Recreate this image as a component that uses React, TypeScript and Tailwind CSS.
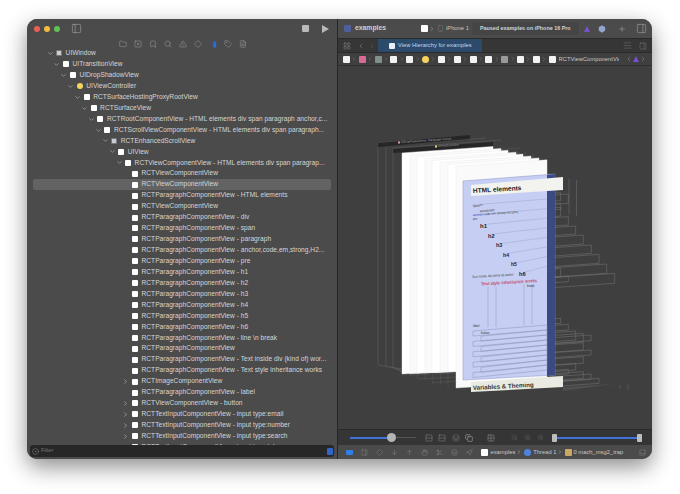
import React from "react";
import { PanelLeft, Folder, SquareX, Bookmark, Search, TriangleAlert, Diamond, SprayCan, Tag, FileText, ChevronDown, ChevronRight, ChevronLeft, Plus, LayoutGrid, AlignJustify, PanelRight, ZoomIn, ZoomOut, Grid2x2, Rows2, Layers, Copy, CircleDot, ArrowUp, ArrowDown, Hand, Scissors, Navigation, Box, Smartphone } from "lucide-react";

type Row = { n: number; t: string; c?: "d" | "r"; k?: "y" | "g" };
const rows: Row[] = [
  { n: 0, t: "UIWindow", c: "d", k: "g" },
  { n: 1, t: "UITransitionView", c: "d" },
  { n: 2, t: "UIDropShadowView", c: "d" },
  { n: 3, t: "UIViewController", c: "d", k: "y" },
  { n: 4, t: "RCTSurfaceHostingProxyRootView", c: "d" },
  { n: 5, t: "RCTSurfaceView", c: "d" },
  { n: 6, t: "RCTRootComponentView - HTML elements div span paragraph anchor,c...", c: "d" },
  { n: 7, t: "RCTScrollViewComponentView - HTML elements div span paragraph...", c: "d" },
  { n: 8, t: "RCTEnhancedScrollView", c: "d", k: "g" },
  { n: 9, t: "UIView", c: "d" },
  { n: 10, t: "RCTViewComponentView - HTML elements div span paragrap...", c: "d" },
  { n: 11, t: "RCTViewComponentView" },
  { n: 11, t: "RCTViewComponentView" },
  { n: 11, t: "RCTParagraphComponentView - HTML elements" },
  { n: 11, t: "RCTViewComponentView" },
  { n: 11, t: "RCTParagraphComponentView - div" },
  { n: 11, t: "RCTParagraphComponentView - span" },
  { n: 11, t: "RCTParagraphComponentView - paragraph" },
  { n: 11, t: "RCTParagraphComponentView - anchor,code,em,strong,H2..." },
  { n: 11, t: "RCTParagraphComponentView - pre" },
  { n: 11, t: "RCTParagraphComponentView - h1" },
  { n: 11, t: "RCTParagraphComponentView - h2" },
  { n: 11, t: "RCTParagraphComponentView - h3" },
  { n: 11, t: "RCTParagraphComponentView - h4" },
  { n: 11, t: "RCTParagraphComponentView - h5" },
  { n: 11, t: "RCTParagraphComponentView - h6" },
  { n: 11, t: "RCTParagraphComponentView - line \\n break" },
  { n: 11, t: "RCTParagraphComponentView" },
  { n: 11, t: "RCTParagraphComponentView - Text inside div (kind of) wor..." },
  { n: 11, t: "RCTParagraphComponentView - Text style inheritance works" },
  { n: 11, t: "RCTImageComponentView", c: "r" },
  { n: 11, t: "RCTParagraphComponentView - label" },
  { n: 11, t: "RCTViewComponentView - button", c: "r" },
  { n: 11, t: "RCTTextInputComponentView - input type:email", c: "r" },
  { n: 11, t: "RCTTextInputComponentView - input type:number", c: "r" },
  { n: 11, t: "RCTTextInputComponentView - input type:search", c: "r" },
  { n: 11, t: "RCTTextInputComponentView - input type:tel", c: "r" },
];

const ic = "text-[#b4b4b4]";
const crumbs = ["w", "p", "g", "w", "w", "y", "w", "w", "w", "w", "s", "w", "w", "w"];

// right-hand wire boxes: [top, bottom, right] in zoom units of the reference
const wires: [number, number, number][] = [
  [68, 92, 62], [72, 100, 85], [100, 118, 62], [112, 138, 62], [140, 165, 85], [168, 192, 107], [195, 222, 130], [225, 250, 154],
  [253, 280, 177], [282, 310, 200], [310, 340, 224], [295, 320, 62], [318, 335, 85],
  [445, 460, 62], [463, 480, 85], [483, 510, 107], [490, 515, 130], [495, 512, 153], [518, 540, 130], [540, 555, 153],
  [560, 580, 130], [580, 600, 107], [598, 612, 85], [605, 625, 130], [612, 628, 153], [625, 640, 177],
];

function Tree() {
  return (
    <div className="flex-1 min-h-0 overflow-hidden">
      <div className="-mt-[2px]">
        {rows.map((r, i) => (
          <div
            key={i}
            className={"h-[10.94px] flex items-center rounded-[2px] mx-[6px] whitespace-nowrap " + (i === 12 ? "bg-[#636363]" : "")}
            style={{ paddingLeft: 13 + 6.9 * r.n }}
          >
            <span className="w-[8px] flex justify-center shrink-0 text-[#bdbdbd]">
              {r.c === "d" && <ChevronDown size={7} strokeWidth={2} />}
              {r.c === "r" && <ChevronRight size={7} strokeWidth={2} />}
            </span>
            <span
              className={
                "w-[6px] h-[6px] ml-[2px] mr-[3.6px] shrink-0 rounded-[1px] " +
                (r.k === "y" ? "bg-[#f4d35e] rounded-full" : r.k === "g" ? "bg-[#c9ccd2] border border-[#777]" : "bg-white")
              }
            />
            <span className="text-[6.6px] leading-none text-[#d6d6d6] tracking-[0.03px]">{r.t}</span>
          </div>
        ))}
      </div>
    </div>
  );
}

function Canvas() {
  const lefts = [402, 410, 417, 425, 432, 440, 448, 456];
  return (
    <svg className="absolute left-0 top-0" width="314" height="363" viewBox="338 66 314 363" fontFamily="'Liberation Sans', sans-serif">
      {/* back wireframes on the left */}
      {[378, 386, 393].map((x, i) => (
        <path key={i} d={`M${x} ${143 + i * 2.5}L${x + 92 + i * 8} ${136 + i * 2}M${x} ${143 + i * 2.5}V${365 + i}L402 ${369 + i * 1.5}`} stroke="#5f5f5f" strokeWidth="0.6" fill="none" />
      ))}
      <path d="M378 143L470 135V139L378 147Z" fill="#262626" />
      <path d="M393 149L493 142V146L393 153Z" fill="#262626" />
      <rect x="398" y="141.5" width="2" height="2" fill="#e39ab0" />
      <text x="401" y="143" fontSize="2.8" fill="#aaa" transform="rotate(-4 401 143)">UIDropShadowView - Paragraph vertical</text>
      <rect x="435" y="145.5" width="2" height="2" fill="#eedc88" />
      <text x="438" y="147" fontSize="2.8" fill="#aaa" transform="rotate(-4 438 147)">UIViewController</text>
      {/* wires behind the white stack, upper right */}
      {[0, 1, 2, 3, 4, 5].map((i) => (
        <path key={i} d={`M${493 + i * 8} ${148 + i}V${170 + i * 2}`} stroke="#5f5f5f" strokeWidth="0.5" fill="none" />
      ))}
      <path d="M493 150L520 148M493 155L520 153M493 160L520 158" stroke="#5f5f5f" strokeWidth="0.5" fill="none" />
      <path d="M569 179V215M576.500 180V216M620 385V389M628 385V390" stroke="#5e5e5e" strokeWidth="0.8" fill="none" />
      {/* right-hand wires */}
      {wires.map(([t, b, r], i) => {
        const rx = 540 + r / 3;
        const ty = 170 + t / 3;
        const by = 170 + b / 3;
        const dy = (rx - 547) * 0.07;
        return <path key={i} d={`M547 ${ty + dy}L${rx} ${ty}V${by}L547 ${by + dy}`} stroke="#6f6f6f" strokeWidth="0.6" fill="none" />;
      })}
      <path d="M563 387L614 384L563 391Z" fill="#4f4f4f" />
      {/* lower-left grid under the white stack */}
      {[0, 1, 2, 3, 4, 5].map((i) => (
        <path key={i} d={`M${410 + i * 7.6} 372V${377 + i * 1.8}`} stroke="#5d5d5d" strokeWidth="0.5" fill="none" />
      ))}
      <path d="M410 375L456 373M418 379L456 377M432 383L456 381" stroke="#5d5d5d" strokeWidth="0.5" fill="none" />
      {/* white planes */}
      {lefts.map((x, i) => (
        <path key={x} d={`M${x} ${153 + i * 1.9}L${x + 91} ${146.5 + i * 1.9}V${i === 7 ? 382 : 369}L${x} ${i === 7 ? 388 : 374 - i * 0.4}Z`} fill={i % 2 ? "#fafafa" : "#ffffff"} stroke="#e8e8e8" strokeWidth="0.4" />
      ))}
      {/* blue plane */}
      <path d="M463 181L555 174V375L463 380Z" fill="#c6cef4" stroke="#8a94c8" strokeWidth="0.5" />
      <path d="M547 175L555 174V375L547 376Z" fill="#3c4a84" />
      {/* box outlines inside blue */}
      {[0, 1, 2, 3, 4, 5, 6, 7].map((i) => (
        <path key={i} d={`M${472 + i * 7.5} ${205 + i * 9.6}L547 ${199 + i * 9.6}`} stroke="#a0a7c8" strokeWidth="0.5" fill="none" />
      ))}
      <path d="M488 287V327M496 287V327M524 284V325M532 284V324" stroke="#8f97b8" strokeWidth="0.5" fill="none" />
      {[0, 1, 2, 3, 4, 5, 6, 7, 8].map((i) => (
        <path key={i} d={`M${473 + (i % 2) * 8} ${331 + i * 5.2}L547 ${325 + i * 5}V${330 + i * 5}L${473 + (i % 2) * 8} ${336 + i * 5.2}Z`} stroke="#8a92b4" strokeWidth="0.5" fill="none" />
      ))}
      {/* text */}
      <path d="M471 185L563 177V190L471 196Z" fill="#f2f2ee" />
      <text x="473" y="193" fontSize="6.6" fontWeight="700" fill="#222" transform="rotate(-3.5 473 193)">HTML elements</text>
      <text x="473" y="207" fontSize="3.2" fill="#333" transform="rotate(-4 473 207)">span<tspan dy="-1" fontSize="2.4">div</tspan></text>
      <text x="480" y="212" fontSize="3.2" fill="#333" transform="rotate(-4 480 212)">paragraph</text>
      <text x="473" y="216" fontSize="3.2" fill="#2233aa" transform="rotate(-4 473 216)">anchor<tspan fill="#333"> code em strong H2 (pre)</tspan></text>
      <text x="473" y="220" fontSize="3.2" fill="#333" transform="rotate(-4 473 220)">pre</text>
      <text x="480" y="228" fontSize="6" fontWeight="700" fill="#1a1a2a">h1</text>
      <text x="488" y="238" fontSize="5.6" fontWeight="700" fill="#1a1a2a">h2</text>
      <text x="496" y="247" fontSize="5.4" fontWeight="700" fill="#1a1a2a">h3</text>
      <text x="503" y="257" fontSize="5.2" fontWeight="700" fill="#1a1a2a">h4</text>
      <text x="511" y="266" fontSize="5" fontWeight="700" fill="#1a1a2a">h5</text>
      <text x="519" y="276" fontSize="5.6" fontWeight="700" fill="#1a1a2a">h6</text>
      <text x="472" y="278" fontSize="3.2" fill="#333" transform="rotate(-3.5 472 278)">Text inside div (kind of) works</text>
      <text x="481" y="285.5" fontSize="4.6" fill="#c0103a" transform="rotate(-3.5 481 285.5)">Text style inheritance works</text>
      <text x="527" y="287" fontSize="3" fill="#333">break</text>
      <text x="473" y="327" fontSize="3" fill="#333">label</text>
      <text x="481" y="333.5" fontSize="3" fill="#333">button</text>
      <path d="M471 382L563 376V387L471 392Z" fill="#e9ebe2" />
      <text x="473" y="390" fontSize="6.2" fontWeight="700" fill="#333" transform="rotate(-3 473 390)">Variables &amp; Theming</text>
    </svg>
  );
}

export default function App() {
  return (
    <div className="w-[680px] h-[494px] bg-white overflow-hidden pl-[27px] pt-[19px] font-['Liberation_Sans',sans-serif]">
      <div className="w-[625px] h-[440px] flex rounded-[10px] overflow-hidden bg-[#3f3f3f] shadow-[0_8px_22px_rgba(0,0,0,0.45)]">
        {/* Sidebar */}
        <div className="w-[311px] shrink-0 flex flex-col bg-[#4b4b4b] border-r border-[#262626]">
          <div className="h-[19px] flex items-center pl-[7px] pr-[8px] shrink-0">
            <span className="w-[6px] h-[6px] rounded-full bg-[#ec5f57]" />
            <span className="w-[6px] h-[6px] rounded-full bg-[#f2bb3d] ml-[4px]" />
            <span className="w-[6px] h-[6px] rounded-full bg-[#5fc251] ml-[4px]" />
            <PanelLeft size={11} strokeWidth={1} className="ml-[11px] text-[#c0c0c0]" />
            <span className="ml-auto w-[7px] h-[7px] bg-[#b8b8b8] rounded-[1px]" />
            <span className="ml-[13px] w-0 h-0 border-y-[4px] border-y-transparent border-l-[7px] border-l-[#b8b8b8]" />
          </div>
          <div className={"h-[12px] shrink-0 flex items-center justify-center gap-[7px] pl-[1px] " + ic}>
            <Folder size={8} strokeWidth={1.2} />
            <SquareX size={8} strokeWidth={1.2} />
            <Bookmark size={8} strokeWidth={1.2} />
            <Search size={8} strokeWidth={1.2} />
            <TriangleAlert size={8} strokeWidth={1.2} />
            <Diamond size={8} strokeWidth={1.2} />
            <SprayCan size={8} strokeWidth={1.2} className="text-[#2f6fe0] fill-[#2f6fe0]" />
            <Tag size={8} strokeWidth={1.2} />
            <FileText size={8} strokeWidth={1.2} />
          </div>
          <Tree />
          <div className="h-[12px] mx-[3px] mb-[2px] mt-[0px] shrink-0 rounded-[3px] bg-[#272727] flex items-center pl-[2px] pr-[1px]">
            <CircleDot size={7} strokeWidth={1.2} className="text-[#aaa]" />
            <span className="ml-[2px] text-[5.5px] leading-none text-[#777]">Filter</span>
            <span className="ml-auto w-[6px] h-[7px] rounded-[1px] bg-[#2f66c8]" />
          </div>
        </div>

        {/* Main */}
        <div className="flex-1 min-w-0 flex flex-col">
          <div className="h-[19px] shrink-0 flex items-center pl-[6px] pr-[5px] bg-[#4b4b4b]">
            <span className="w-[7px] h-[7px] rounded-[1px] bg-[#4f5f9a]" />
            <span className="ml-[4px] text-[6.8px] font-bold text-[#cfcfcf]">examples</span>
            <span className="ml-[35px] w-[7px] h-[7px] rounded-[1px] bg-white" />
            <ChevronRight size={6} className="text-[#aaa] ml-[1px]" />
            <Smartphone size={7} strokeWidth={1} className="text-[#999] ml-[2px]" />
            <span className="ml-[2px] text-[5.8px] text-[#c4c4c4] whitespace-nowrap">iPhone 1</span>
            <span className="ml-[3px] h-[13px] px-[8px] flex items-center rounded-[3px] bg-[#454545] text-[5.4px] font-bold text-[#d2d2d2] whitespace-nowrap">Paused examples on iPhone 16 Pro</span>
            <span className="ml-[5px] w-0 h-0 border-x-[3.5px] border-x-transparent border-b-[6px] border-b-[#7a4fd0]" />
            <Box size={8} strokeWidth={1} className="ml-[8px] text-[#9fb4d6] fill-[#8fa6d0]" />
            <Plus size={8} strokeWidth={1.3} className="ml-[12px] text-[#bbb]" />
            <PanelRight size={11} strokeWidth={1} className="ml-auto text-[#bbb]" />
          </div>
          <div className="h-[15px] shrink-0 flex items-center bg-[#363636] border-y border-[#2a2a2a]">
            <LayoutGrid size={8} strokeWidth={1} className="ml-[5px] text-[#aaa]" />
            <ChevronLeft size={8} strokeWidth={1.2} className="ml-[6px] text-[#aaa]" />
            <ChevronRight size={8} strokeWidth={1.2} className="ml-[3px] text-[#777]" />
            <div className="ml-[2px] w-[104px] h-full flex items-center bg-[#2c4a6b] pl-[11px]">
              <span className="w-[6px] h-[6px] bg-[#e8eef5] rounded-[1px]" />
              <span className="ml-[3px] text-[5.8px] text-[#c6d5e6] whitespace-nowrap">View Hierarchy for examples</span>
            </div>
            <AlignJustify size={9} strokeWidth={1} className="ml-auto text-[#8a8a8a]" />
            <PanelRight size={8} strokeWidth={1} className="ml-[7px] mr-[5px] text-[#999]" />
          </div>
          <div className="h-[13px] shrink-0 flex items-center pl-[5px] pr-[2px] bg-[#3f3f3f] border-b border-[#303030]">
            {crumbs.map((c, i) => (
              <React.Fragment key={i}>
                <span
                  className={
                    "w-[7px] h-[7px] rounded-[1px] shrink-0 " +
                    (c === "p" ? "bg-[#d86a9a]" : c === "g" ? "bg-[#7f9088]" : c === "y" ? "bg-[#f4d35e] rounded-full" : c === "s" ? "bg-[#9a9a9a]" : "bg-[#f2f2f2]")
                  }
                />
                {i < 13 && <ChevronRight size={6} strokeWidth={1.3} className="mx-[1.42px] shrink-0 text-[#999]" />}
              </React.Fragment>
            ))}
            <span className="ml-[3px] text-[5.8px] text-[#c8c8c8] whitespace-nowrap w-[60px] overflow-hidden">RCTViewComponentView</span>
            <ChevronLeft size={8} strokeWidth={1.2} className="ml-[6px] text-[#aaa]" />
            <span className="w-0 h-0 border-x-[3.5px] border-x-transparent border-b-[6px] border-b-[#7a4fd0]" />
            <ChevronRight size={8} strokeWidth={1.2} className="text-[#aaa]" />
          </div>
          <div className="flex-1 min-h-0 relative bg-[#3f3f3f]">
            <Canvas />
          </div>
          <div className="h-[16px] shrink-0 flex items-center bg-[#353535] border-t border-[#2a2a2a] pl-[12px] pr-[10px]">
            <div className="w-[66px] h-[8px] relative flex items-center">
              <div className="w-[40px] h-[2px] bg-[#3f73d9]" />
              <div className="flex-1 h-[1px] bg-[#555]" />
              <span className="absolute left-[37px] w-[9px] h-[9px] rounded-full bg-[#b5b5b5]" />
            </div>
            <Rows2 size={8} strokeWidth={1} className="ml-[9px] text-[#aaa]" />
            <Rows2 size={8} strokeWidth={1} className="ml-[5px] text-[#aaa]" />
            <Layers size={8} strokeWidth={1} className="ml-[6px] text-[#aaa]" />
            <Copy size={8} strokeWidth={1.3} className="ml-[5px] text-[#ccc]" />
            <Grid2x2 size={8} strokeWidth={1} className="ml-[14px] text-[#bbb]" />
            <ZoomOut size={7} strokeWidth={1} className="ml-[16px] text-[#777]" />
            <ZoomIn size={7} strokeWidth={1} className="ml-[6px] text-[#777]" />
            <ZoomIn size={7} strokeWidth={1} className="ml-[6px] text-[#777]" />
            <span className="ml-[8px] w-[5px] h-[8px] bg-[#bdbdbd] rounded-[1px]" />
            <div className="flex-1 h-[2px] bg-[#3f73d9]" />
            <span className="w-[5px] h-[8px] bg-[#bdbdbd] rounded-[1px]" />
          </div>
          <div className="h-[14px] shrink-0 flex items-center bg-[#4b4b4b] pl-[7.5px] pr-[6px]">
            <span className="w-[7px] h-[5px] rounded-[1px] bg-[#2f7fe8]" />
            <PanelRight size={7} strokeWidth={1} className="ml-[8px] text-[#a4a4a4]" />
            <Diamond size={7} strokeWidth={1} className="ml-[8px] text-[#a4a4a4]" />
            <ArrowDown size={7} strokeWidth={1} className="ml-[8px] text-[#a4a4a4]" />
            <ArrowUp size={7} strokeWidth={1} className="ml-[8px] text-[#a4a4a4]" />
            <Hand size={7} strokeWidth={1} className="ml-[8px] text-[#a4a4a4]" />
            <Scissors size={7} strokeWidth={1} className="ml-[8px] text-[#a4a4a4]" />
            <Layers size={7} strokeWidth={1} className="ml-[8px] text-[#a4a4a4]" />
            <Navigation size={7} strokeWidth={1} className="ml-[8px] text-[#a4a4a4]" />
            <span className="ml-[8px] w-[7px] h-[7px] rounded-[1px] bg-white" />
            <span className="ml-[3px] text-[5.8px] text-[#c8c8c8] whitespace-nowrap">examples</span>
            <ChevronRight size={6} className="text-[#aaa] ml-[1px]" />
            <span className="ml-[2px] w-[7px] h-[7px] rounded-full bg-[#4f82de]" />
            <span className="ml-[2px] text-[5.8px] text-[#c8c8c8] whitespace-nowrap">Thread 1</span>
            <ChevronRight size={6} className="text-[#aaa]" />
            <span className="ml-[2px] w-[7px] h-[7px] rounded-[1px] bg-[#c9a866]" />
            <span className="ml-[2px] text-[5.8px] text-[#c8c8c8] whitespace-nowrap">0 mach_msg2_trap</span>
            <PanelRight size={7} strokeWidth={1} className="ml-auto text-[#aaa] rotate-90" />
          </div>
        </div>
      </div>
    </div>
  );
}
